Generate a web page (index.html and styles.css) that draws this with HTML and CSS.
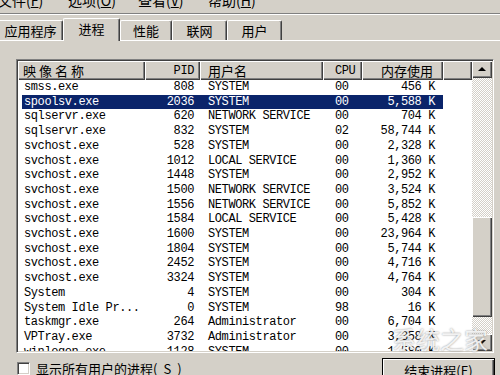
FILE: index.html
```html
<!DOCTYPE html>
<html lang="zh-CN">
<head>
  <meta charset="UTF-8">
  <title>Windows 任务管理器</title>
  <link rel="stylesheet" href="styles.css">
</head>
<body>

  <div class="menubar">
    <span>文件(<u>F</u>)</span>
    <span>选项(<u>O</u>)</span>
    <span>查看(<u>V</u>)</span>
    <span>帮助(<u>H</u>)</span>
  </div>

  <div class="tabs">
    <div class="tab w1">应用程序</div>
    <div class="tab w2 active">进程</div>
    <div class="tab w3">性能</div>
    <div class="tab w4">联网</div>
    <div class="tab w4">用户</div>
  </div>

  <div class="panel">
    <div class="listbox">
      <div class="list">
        <table>
          <colgroup>
            <col style="width:127px">
            <col style="width:55px">
            <col style="width:123px">
            <col style="width:39px">
            <col style="width:81px">
            <col style="width:29px">
          </colgroup>
          <thead>
            <tr>
              <th class="name wide">映像名称</th>
              <th class="pid mono">PID</th>
              <th class="user">用户名</th>
              <th class="cpu mono">CPU</th>
              <th class="mem">内存使用</th>
              <th></th>
            </tr>
          </thead>
          <tbody>
            <tr><td class="name">smss.exe</td><td class="pid">808</td><td class="user">SYSTEM</td><td class="cpu">00</td><td class="mem">456 K</td><td></td></tr>
            <tr class="sel"><td class="name">spoolsv.exe</td><td class="pid">2036</td><td class="user">SYSTEM</td><td class="cpu">00</td><td class="mem">5,588 K</td><td></td></tr>
            <tr><td class="name">sqlservr.exe</td><td class="pid">620</td><td class="user">NETWORK SERVICE</td><td class="cpu">00</td><td class="mem">704 K</td><td></td></tr>
            <tr><td class="name">sqlservr.exe</td><td class="pid">832</td><td class="user">SYSTEM</td><td class="cpu">02</td><td class="mem">58,744 K</td><td></td></tr>
            <tr><td class="name">svchost.exe</td><td class="pid">528</td><td class="user">SYSTEM</td><td class="cpu">00</td><td class="mem">2,328 K</td><td></td></tr>
            <tr><td class="name">svchost.exe</td><td class="pid">1012</td><td class="user">LOCAL SERVICE</td><td class="cpu">00</td><td class="mem">1,360 K</td><td></td></tr>
            <tr><td class="name">svchost.exe</td><td class="pid">1448</td><td class="user">SYSTEM</td><td class="cpu">00</td><td class="mem">2,952 K</td><td></td></tr>
            <tr><td class="name">svchost.exe</td><td class="pid">1500</td><td class="user">NETWORK SERVICE</td><td class="cpu">00</td><td class="mem">3,524 K</td><td></td></tr>
            <tr><td class="name">svchost.exe</td><td class="pid">1556</td><td class="user">NETWORK SERVICE</td><td class="cpu">00</td><td class="mem">5,852 K</td><td></td></tr>
            <tr><td class="name">svchost.exe</td><td class="pid">1584</td><td class="user">LOCAL SERVICE</td><td class="cpu">00</td><td class="mem">5,428 K</td><td></td></tr>
            <tr><td class="name">svchost.exe</td><td class="pid">1600</td><td class="user">SYSTEM</td><td class="cpu">00</td><td class="mem">23,964 K</td><td></td></tr>
            <tr><td class="name">svchost.exe</td><td class="pid">1804</td><td class="user">SYSTEM</td><td class="cpu">00</td><td class="mem">5,744 K</td><td></td></tr>
            <tr><td class="name">svchost.exe</td><td class="pid">2452</td><td class="user">SYSTEM</td><td class="cpu">00</td><td class="mem">4,716 K</td><td></td></tr>
            <tr><td class="name">svchost.exe</td><td class="pid">3324</td><td class="user">SYSTEM</td><td class="cpu">00</td><td class="mem">4,764 K</td><td></td></tr>
            <tr><td class="name">System</td><td class="pid">4</td><td class="user">SYSTEM</td><td class="cpu">00</td><td class="mem">304 K</td><td></td></tr>
            <tr><td class="name">System Idle Pr...</td><td class="pid">0</td><td class="user">SYSTEM</td><td class="cpu">98</td><td class="mem">16 K</td><td></td></tr>
            <tr><td class="name">taskmgr.exe</td><td class="pid">264</td><td class="user">Administrator</td><td class="cpu">00</td><td class="mem">6,704 K</td><td></td></tr>
            <tr><td class="name">VPTray.exe</td><td class="pid">3732</td><td class="user">Administrator</td><td class="cpu">00</td><td class="mem">3,358 K</td><td></td></tr>
            <tr><td class="name">winlogon.exe</td><td class="pid">1128</td><td class="user">SYSTEM</td><td class="cpu">00</td><td class="mem">1,580 K</td><td></td></tr>
          </tbody>
        </table>
      </div>
      <div class="scrollbar">
        <div class="sb-btn up"></div>
        <div class="sb-track"><div class="sb-thumb"></div></div>
        <div class="sb-btn down"></div>
      </div>
    </div>

    <div class="footer">
      <label class="check"><span class="box"></span>显示所有用户的进程(<u>S</u>)</label>
      <button class="end-btn">结束进程(<u>E</u>)</button>
    </div>

    <div class="watermark">系统之家</div>
  </div>

</body>
</html>
```

FILE: styles.css
```css
* {
  box-sizing: border-box;
  margin: 0;
  padding: 0;
}

body {
  width: 500px;
  height: 375px;
  overflow: hidden;
  background: #d4d0c8;
  color: #000;
  font-family: "Noto Sans CJK SC", sans-serif;
  font-size: 13px;
}

u {
  text-decoration: underline;
}

/* menu bar, cut off at the top */
.menubar {
  display: flex;
  height: 14px;
  overflow: hidden;
  border-bottom: 1px solid #808080;
  box-shadow: 0 1px 0 #fff;
}

.menubar span {
  width: 70px;
  margin-top: -7px;
  font-size: 14px;
  line-height: 14px;
  white-space: nowrap;
}

.menubar span:first-child {
  margin-left: -2px;
}

/* tabs */
.tabs {
  display: flex;
  align-items: flex-end;
  height: 26px;
  margin-top: 1px;
  border-bottom: 1px solid #fff;
}

.tab {
  height: 20px;
  padding-top: 2px;
  text-align: center;
  line-height: 16px;
  border-top: 1px solid #fff;
  border-left: 1px solid #fff;
  border-right: 1px solid #404040;
  border-radius: 2px 2px 0 0;
  box-shadow: inset -1px 0 #808080;
}

.tab.w1 { width: 65px; margin-left: -2px; }
.tab.w2 { width: 57px; }
.tab.w3 { width: 52px; }
.tab.w4 { width: 55px; }

.tab.active {
  height: 23px;
  margin-bottom: -1px;
  padding-top: 2px;
  background: #d4d0c8;
}

/* process list */
.panel {
  position: relative;
  padding: 18px 5px 0 16px;
}

.listbox {
  display: flex;
  width: 478px;
  height: 294px;
  padding: 1px;
  border-top: 1px solid #808080;
  border-left: 1px solid #808080;
  border-bottom: 1px solid #fff;
  border-right: 1px solid #fff;
  box-shadow: inset 1px 1px #404040, inset -1px -1px #d4d0c8;
}

.list {
  width: 454px;
  height: 100%;
  overflow: hidden;
  background: #fff;
}

table {
  width: 454px;
  table-layout: fixed;
  border-collapse: collapse;
}

th {
  height: 18px;
  padding: 0;
  font-weight: normal;
  font-size: 13px;
  text-align: left;
  white-space: nowrap;
  background: #d4d0c8;
  box-shadow: inset 1px 1px #fff, inset -1px -1px #404040, inset -2px -2px #808080;
}

th.mono {
  font-family: "Liberation Mono", monospace;
  font-size: 12px;
  letter-spacing: -0.4px;
}

th.wide {
  letter-spacing: 3px;
}

td {
  height: 14.7px;
  padding: 0;
  line-height: 14.7px;
  font-family: "Liberation Mono", monospace;
  font-size: 12px;
  letter-spacing: -0.4px;
  white-space: nowrap;
  overflow: hidden;
  color: #000;
}

.name { padding-left: 6px; }
th.name { padding-left: 5px; }
.pid { text-align: right; padding-right: 6px; }
th.pid { text-align: right; }
.user { padding-left: 8px; }
.cpu { padding-left: 12px; }
.mem { text-align: right; padding-right: 8px; }
th.mem { text-align: right; padding-right: 10px; }

tr.sel td {
  background: #0a246a;
  color: #fff;
}

tr.sel td.name {
  background: linear-gradient(to right, #fff 4px, #0a246a 4px);
}

tr.sel td:last-child {
  background: #fff;
}

/* scrollbar */
.scrollbar {
  display: flex;
  flex-direction: column;
  width: 20px;
}

.sb-btn,
.sb-thumb {
  background: #d4d0c8;
  box-shadow: inset 1px 1px #fff, inset -1px -1px #404040, inset -2px -2px #808080;
}

.sb-btn {
  position: relative;
  height: 17px;
}

.sb-btn::after {
  content: "";
  position: absolute;
  left: 6px;
  top: 6px;
  border-left: 4px solid transparent;
  border-right: 4px solid transparent;
}

.sb-btn.up::after {
  border-bottom: 4px solid #000;
}

.sb-btn.down::after {
  border-top: 4px solid #000;
}

.sb-track {
  flex: 1;
  background: repeating-conic-gradient(#d4d0c8 0 25%, #fff 0 50%) 0 0 / 2px 2px;
}

.sb-thumb {
  height: 100px;
  margin-top: 139px;
}

/* bottom row */
.footer {
  display: flex;
  justify-content: space-between;
  align-items: flex-start;
  margin-top: 5px;
  padding-left: 1px;
}

.check {
  display: flex;
  align-items: center;
  gap: 6px;
  margin-top: 3px;
  font-size: 13px;
  line-height: 15px;
}

.box {
  width: 13px;
  height: 13px;
  background: #fff;
  border-top: 1px solid #808080;
  border-left: 1px solid #808080;
  border-bottom: 1px solid #fff;
  border-right: 1px solid #fff;
  box-shadow: inset 1px 1px #404040, inset -1px -1px #d4d0c8;
}

.end-btn {
  width: 113px;
  height: 24px;
  border: 1px solid #000;
  background: #d4d0c8;
  font-family: "Noto Sans CJK SC", sans-serif;
  font-size: 13px;
  color: #000;
  box-shadow: inset 1px 1px #fff, inset -1px -1px #404040, inset -2px -2px #808080;
}

/* site watermark over the list corner */
.watermark {
  position: absolute;
  left: 392px;
  top: 280px;
  font-size: 24px;
  color: rgba(255, 255, 255, 0.85);
  text-shadow: 0 0 2px #8a8a8a;
}
```
